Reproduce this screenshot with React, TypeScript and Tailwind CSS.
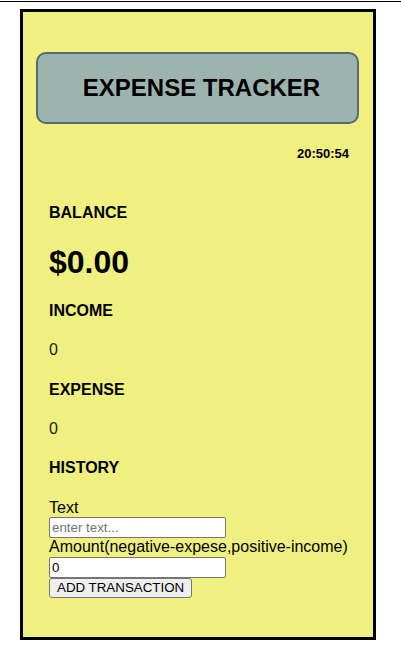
import { useState } from 'react';

// Expense tracker card — single column, fixed 356×631 frame
export default function App() {
  const [text, setText] = useState('');
  const [amount, setAmount] = useState('0');

  return (
    <div className="min-h-[655px] w-[401px] bg-white pt-px text-black" style={{ fontFamily: '"Liberation Sans", Arial, sans-serif' }}>
      {/* top rule */}
      <div className="h-px w-full bg-black" />

      {/* card */}
      <div className="ml-[20px] mt-[7px] h-[631px] w-[356px] border-[3px] border-black bg-[#eff080]">
        {/* header */}
        <div className="ml-[13px] mt-[40px] flex h-[72px] w-[323px] items-center justify-center rounded-[10px] border-2 border-[#5d6474] bg-[#9cb3ae] pl-2">
          <h1 className="text-[24px] font-bold leading-[28px]">EXPENSE TRACKER</h1>
        </div>

        {/* clock */}
        <div className="mt-[22px] pr-[24px] text-right text-[13px] font-bold leading-[15px]">20:50:54</div>

        <div className="pl-[26px]">
          <h4 className="mt-[43px] text-[16px] font-bold leading-[18px]">BALANCE</h4>
          <h1 className="mt-[22px] text-[32px] font-bold leading-[36px]">$0.00</h1>

          <h4 className="mt-[22px] text-[16px] font-bold leading-[18px]">INCOME</h4>
          <p className="mt-[21px] text-[16px] leading-[18px] text-[#10261f]">0</p>

          <h4 className="mt-[22px] text-[16px] font-bold leading-[18px]">EXPENSE</h4>
          <p className="mt-[21px] text-[16px] leading-[18px] text-[#10261f]">0</p>

          <h4 className="mt-[21px] text-[16px] font-bold leading-[18px]">HISTORY</h4>

          {/* form */}
          <form className="mt-[22px] flex flex-col items-start" onSubmit={(e) => e.preventDefault()}>
            <label className="text-[16px] leading-[18px]">Text</label>
            <input
              type="text"
              value={text}
              onChange={(e) => setText(e.target.value)}
              placeholder="enter text..."
              className="h-[21px] w-[177px] rounded-[2px] border border-[#767676] bg-white px-[2px] text-[13.33px] placeholder:text-[#757575] focus:outline-none"
            />
            <label className="text-[16px] leading-[18px]">Amount(negative-expese,positive-income)</label>
            <input
              type="text"
              value={amount}
              onChange={(e) => setAmount(e.target.value)}
              className="mt-px h-[21px] w-[177px] rounded-[2px] border border-[#767676] bg-white px-[2px] text-[13.33px] focus:outline-none"
            />
            <button
              type="submit"
              className="h-[20px] rounded-[3px] border border-[#767676] bg-[#efefef] px-[7px] text-[13.33px] leading-[16px]"
            >
              ADD TRANSACTION
            </button>
          </form>
        </div>
      </div>
    </div>
  );
}
